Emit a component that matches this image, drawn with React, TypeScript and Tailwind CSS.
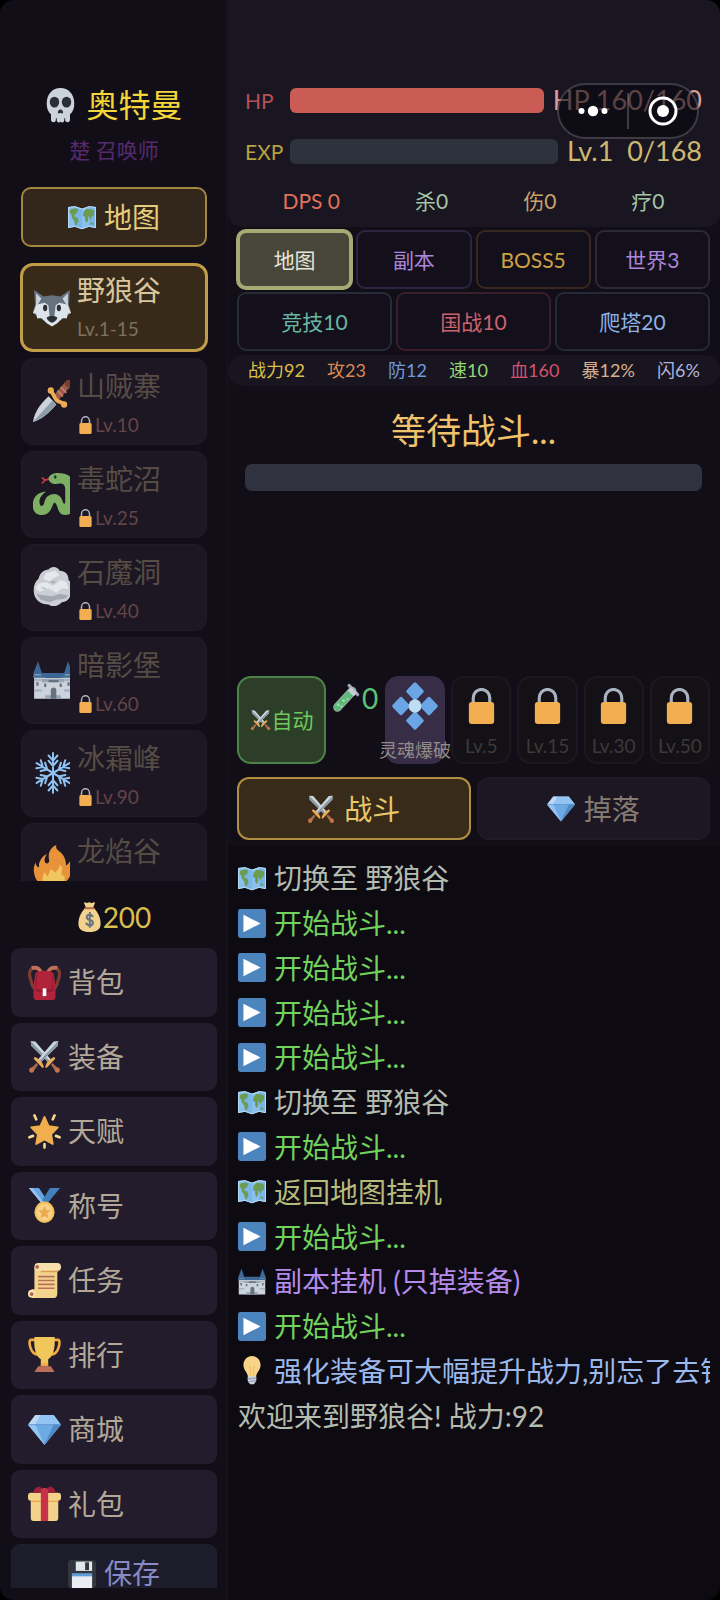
import type { ReactNode } from "react";

type IconName =
  | "skull" | "map" | "wolf" | "dagger" | "snake" | "rock" | "castle" | "snow" | "fire"
  | "money" | "bag" | "swords" | "star" | "medal" | "scroll" | "trophy" | "gem" | "gift"
  | "disk" | "lock" | "tube" | "rune" | "play" | "bulb";

const sword = (
  <>
    <path fill="#CCD6DD" d="M3 2l5 .5L25 21l-3 3L3.500 7z" />
    <path fill="#8899A6" d="M3 2l20.500 20.500L22 24 3.500 7z" />
    <path fill="#EBAA5A" d="M28 18.500c1 0 2 1 1.500 2l-9 9c-1 .6-2-.6-1.600-1.600l1.600-3.400 4-4z" />
    <path fill="#A5694B" d="M25 26.500l1.800-1.800 6 5.300-3 3z" />
    <circle cx="32" cy="32" r="2.700" fill="#C1744A" />
  </>
);

const art: Record<IconName, ReactNode> = {
  skull: (
    <>
      <path fill="#CCD3DD" d="M34 16C34 6 27 0 18 0S2 6 2 16c0 5.500 1.800 9 5 11v5.500a2.800 2.800 0 0 0 5.600 0V31h1v2.500a2.500 2.500 0 0 0 4.400 1 2.500 2.500 0 0 0 4.400-1V31h1v1.500a2.800 2.800 0 0 0 5.600 0V27c3.200-2 5-5.500 5-11z" />
      <circle cx="11" cy="14.500" r="5.500" fill="#292F33" />
      <circle cx="25" cy="14.500" r="5.500" fill="#292F33" />
      <path fill="#292F33" d="M18 22c2 0 3.500 2 3 3.400-.5 1.200-2 .6-3 .1-1 .5-2.500 1.100-3-.1-.5-1.400 1-3.400 3-3.400z" />
    </>
  ),
  map: (
    <>
      <path fill="#88C0F0" d="M0 5l9-1 9 3 9-3 9 1v26l-9-1.500-9 3-9-3L0 31z" />
      <path fill="#6BA9E0" d="M9 4l9 3v25.500l-9-3zM27 4l9 1v26l-9-1.500z" opacity=".45" />
      <path fill="#6B9C52" d="M3 8l6-1.500 4 1.500-1 4-3 2-1 3 4 1 1.500 4-2.500 6-2-1-1-5-3-4-1-4-2-2zM20 11l4-4 7 1 3 2-1 6-3 1-1 4-2-4-1-1v5l-2 4-2-4v-4l-3-1zM29 24l4 1-1 2-3-.5z" />
      <path fill="none" stroke="#BBDDF5" strokeWidth="1.200" d="M.6 5.500l8.400-1 9 3 9-3 8.400 1V30.500L27 29l-9 3-9-3-8.400 1.500z" />
    </>
  ),
  wolf: (
    <>
      <path fill="#66727F" d="M1 1l9 6 8-1 8 1 9-6-1 14 2 7-3 3-15 10L3 25l-3-3 2-7z" />
      <path fill="#CCD3DD" d="M3 4l5 5-5 8zM33 4l-5 5 5 8z" />
      <path fill="#DDE3EB" d="M0 23l3-8 8-2 6 4 1 9 1-9 6-4 8 2 3 8-3 .500-1 4.500-4-.5-5 5-5 3-5-3-5-5-4 .5-1-4.500z" />
      <path fill="#66727F" d="M14 7h8l-1 13-1 7h-4l-1-7z" />
      <path fill="#292F33" d="M13 27c1-2 9-2 10 0 0 2-3 4.500-5 5-2-.5-5-3-5-5z" />
      <ellipse cx="11.500" cy="18" rx="2" ry="3" fill="#292F33" />
      <ellipse cx="24.500" cy="18" rx="2" ry="3" fill="#292F33" />
    </>
  ),
  dagger: (
    <>
      <path fill="#CCD3DD" d="M0 36c1-7 5-14 14-22l7 7C14 29 7 34 0 36z" />
      <path fill="#8F9DAA" d="M0 36L17.500 17.500 21 21C14 29 7 34 0 36z" />
      <path stroke="#9A5B4D" strokeWidth="6" d="M21 15L31 4" />
      <path stroke="#C98267" strokeWidth="1.500" d="M22 9l5 5m-2-8l5 5" />
      <path stroke="#EFAB50" strokeWidth="3.400" strokeLinecap="round" d="M16 9c2 2 3 6 5 8s6 2 7 4" fill="none" />
      <circle cx="16" cy="9" r="2.800" fill="#EFAB50" />
      <circle cx="28" cy="21" r="2.800" fill="#EFAB50" />
      <circle cx="32" cy="3" r="3.200" fill="#783E2A" />
    </>
  ),
  snake: (
    <>
      <path fill="none" stroke="#C9384A" strokeWidth="1.500" d="M15 5l-4 1-3-2m3 2l-3 3" />
      <path fill="#7DB062" d="M14 4c2-4 8-4.500 13-3.500 7 1 9 5 9 11V30c0 4-3 6-7 6-6 0-6-5-8-9-1-2-2-2-3 0-2 5-4 9-10 9-8 0-10-8-7-14 2-4 6-6 11-6-4 2-7 6-6 10 .5 3 3 3 4 0 1-5 4-8 9-8s7 4 8 7c1 2 2 2 2-1V14c0-4-2-5-5-5-5 1-10 0-10-5z" />
      <ellipse cx="20" cy="3.500" rx="1.200" ry="1.500" fill="#292F33" />
    </>
  ),
  rock: (
    <>
      <path fill="#CBCFD5" d="M5 11c1-5 5-8 9-8 2-3 8-3 10 1 5 0 8 3 8 8 4 3 4 8 2 11 0 5-4 8-8 8-4 4-9 4-12 2-7 0-12-4-13-9-1-5 0-10 4-13z" />
      <path fill="#E6E9EC" d="M12 6l8-2 4 4-5 2-4 3-6-2zM5 15l7-1 6 3 7-5 5 2 2 6-6-1-5 4-7-4-8 3-4-3z" />
      <path fill="#A3A9B1" d="M3 24l6 1 8 1 7-2 8 1-3 3-8 1-6 2-8-2zM15 13l6 0-3 2zM7 18l5 1-2 1z" />
    </>
  ),
  castle: (
    <>
      <path fill="#CCD3DD" d="M1 13h7l3 3h14l3-3h7v21H1z" />
      <path fill="#99A5B5" d="M8 17h20v3H8zM11 31h14v3H11z" />
      <path fill="#3A6797" d="M0 13L4.500 2 8 12h20l3.500-10L36 13h-7l-2 3H9l-2-3z" />
      <path fill="#AAB3C2" d="M1 17h7v2H1zM28 17h7v2h-7zM1 26h7v2H1zM28 26h7v2h-7z" />
      <path fill="#66727F" d="M16 34v-7a2.500 2.500 0 0 1 5 0v7zM3 20h2v3H3zM31 20h2v3h-2zM10 21h2v3h-2zM24 21h2v3h-2zM14 18h9v2h-9z" />
      <path fill="#3B6E95" d="M0 14h9v2H0zM27 14h9v2h-9z" />
    </>
  ),
  snow: (
    <g fill="none" stroke="#8FC2F2" strokeWidth="1.800" strokeLinecap="round">
      {[0, 60, 120, 180, 240, 300].map((a) => (
        <path key={a} transform={`rotate(${a} 18 18)`} d="M18 18V1M14 3l4 4.500 4-4.500M14 7.500l4 4.500 4-4.500" />
      ))}
    </g>
  ),
  fire: (
    <>
      <path fill="#E8923A" d="M35 19c0-2-.5-4-1.300-5.800-1 2-2.400 3.500-4 4.300C30 11 26 7 23 5c-2-1.300-2.500-3-2-5-5 2-8 7-6.500 13 .5 3-3.500 4-4 1-.3-2 .5-4 2-6-4 1-8 7-7 11-2 0-3-2-3-4-2 3-2 6-1.500 9C2 32 9 36 18 36s17-7 17-17z" />
      <path fill="#F0C65F" d="M28 26c-2 1-3-1-2-4 1-2 0-4-2-5 0 3-2 4-4 7-1-2-3-3-5-3 1 2-1 3-2 6-1-1-2-2-2-4-5 6-2 13 7 13 8 0 12-4 10-10z" />
    </>
  ),
  money: (
    <>
      <path fill="#F2D28C" d="M12 7h12c6 5 10 12 10 19 0 7-6 10-16 10S2 33 2 26C2 19 6 12 12 7z" />
      <path fill="#F2D28C" d="M10 1c2-2 3 1 5 0s3-1 5 0 4-2 6 0l-3 6H13z" />
      <path stroke="#BF6952" strokeWidth="2.500" strokeLinecap="round" d="M12 7.500h12" />
      <path fill="none" stroke="#67757F" strokeWidth="2.800" d="M23 18c-1-3-9-4-9 0 0 5 9 2 9 7 0 4-8 4-10 0M18.500 12v19" />
    </>
  ),
  bag: (
    <>
      <path fill="none" stroke="#7A3D31" strokeWidth="3.500" d="M10 3C2 2 0 8 3 15c1 6 3 9 6 11M26 3c8-1 10 5 7 12-1 6-3 9-6 11" />
      <path fill="none" stroke="#BF7259" strokeWidth="4" d="M14 7C12 3 9 2 4 3M22 7c2-4 5-5 10-4" />
      <path fill="#B0233A" d="M8 9c1-4 19-4 20 0l2 12v11c0 3-1 4-3 4H9c-2 0-3-1-3-4V21z" />
      <path fill="#931B32" d="M9 10h18l1 16c0 3-20 3-20 0z" />
      <path fill="#B0233A" d="M10 8h16l1 16c0 2-18 2-18 0z" />
      <path fill="#F5F8FA" d="M16 24h4v8h-4z" />
    </>
  ),
  swords: (
    <>
      {sword}
      <g transform="matrix(-1 0 0 1 36 0)">{sword}</g>
    </>
  ),
  star: (
    <>
      <path fill="#F0AE4D" stroke="#F0AE4D" strokeWidth="2" strokeLinejoin="round" d="M18 3l4.500 9.500 10 1.300-7.300 7 1.800 10L18 26l-9 4.800 1.800-10-7.300-7 10-1.300z" />
      <g stroke="#F5D98D" strokeWidth="2.800" strokeLinecap="round">
        <path d="M7 1.500l2 4M29 1.500l-2 4M1.500 24l4-1.500M34.500 24l-4-1.500M18 31v3.500" />
      </g>
    </>
  ),
  medal: (
    <>
      <path fill="#65A6E4" d="M1 0h11l9 13-6 3z" />
      <path fill="#4380BC" d="M35 0H24l-9 13 6 3z" />
      <path fill="#9CC3EC" d="M1 0h4l12 15h-3z" />
      <circle cx="18" cy="25" r="11" fill="#F3C35D" />
      <circle cx="18" cy="25" r="8.500" fill="#F8DDA6" opacity=".6" />
      <path fill="#EBAA4E" d="M18 18l2 5h5l-4 3.300 1.500 5.200L18 28.500l-4.500 3L15 26.300 11 23h5z" />
    </>
  ),
  scroll: (
    <>
      <path fill="#F4D38C" d="M7 4h25v26c0 4-1 6-4 6H4V27h3z" />
      <rect x="7" width="29" height="8" rx="4" fill="#F9DFAC" />
      <path fill="#DC9C4D" d="M14 8h19v1.500H14z" />
      <circle cx="10" cy="4" r="2" fill="#AD6555" />
      <circle cx="4" cy="31.500" r="4" fill="#F9DFAC" />
      <circle cx="4" cy="32" r="2" fill="#AD6555" />
      <path stroke="#B9705A" strokeWidth="1.700" d="M11 14h18M11 18h18M11 22h18M11 26h18" />
    </>
  ),
  trophy: (
    <>
      <path fill="none" stroke="#EFAA45" strokeWidth="2.800" d="M9 3H3c-3 0-1 15 8 15M27 3h6c3 0 1 15-8 15" />
      <path fill="#F1C75C" d="M7 0h22c1 13-2 20-7 23v7h-8v-7C9 20 6 13 7 0z" />
      <path fill="#EFAA45" d="M14 27h8v3h-8z" />
      <path fill="#BC6F5A" d="M11 30h14l4 6H7z" />
    </>
  ),
  gem: (
    <>
      <path fill="#6DAAE4" d="M8 3h20l8 10-18 21L0 13z" />
      <path fill="#BDD8F2" d="M8 3l-8 10h8l6-10z" />
      <path fill="#93C4F2" d="M14 3h8l6 10H8zM22 3h6l8 10h-8z" />
      <path fill="#5289C4" d="M28 13h8L18 34z" />
      <path fill="#93C4F2" d="M0 13h8l10 21z" />
      <path stroke="#5289C4" strokeWidth=".7" d="M0 13h36" />
    </>
  ),
  gift: (
    <>
      <path fill="#F5D28A" d="M3 14h30v19c0 2-1 3-3 3H6c-2 0-3-1-3-3z" />
      <rect y="7" width="36" height="8" rx="3" fill="#F5D28A" />
      <path fill="#EFA850" d="M3 15h30v1.500H3z" />
      <path fill="#C73448" d="M14 7h8v29h-8z" />
      <path fill="#A0203A" d="M6 7c0-4 4-7 7-6 2 1 4 2 5 3 1-1 3-2 5-3 3-1 7 2 7 6z" />
      <path fill="#C73448" d="M14 7c0-4 2-5 4-5s4 1 4 5z" />
    </>
  ),
  disk: (
    <>
      <rect width="36" height="36" rx="4" fill="#31373D" />
      <path fill="#E1E8ED" d="M10 2h21v12H10z" />
      <path fill="#31373D" d="M22 3h5v10h-5z" />
      <path fill="#E9EDF2" d="M5 20h26v16H5z" />
      <path fill="#5F9EDA" d="M5 17h26v4H5z" />
    </>
  ),
  lock: (
    <>
      <path fill="none" stroke="#AAB3C0" strokeWidth="3.200" d="M9.500 16V10a8.500 8.500 0 0 1 17 0v6" />
      <rect x="5" y="14" width="26" height="22" rx="3" fill="#F2AE50" />
    </>
  ),
  tube: (
    <>
      <path stroke="#9FA9B3" strokeWidth="11" strokeLinecap="round" d="M7 29L26 10" />
      <path stroke="#9FA9B3" strokeWidth="4" strokeLinecap="round" d="M22 3l11 11" />
      <path stroke="#5CB978" strokeWidth="8.500" strokeLinecap="round" d="M7 29L23 13" />
      <g fill="#A6E5B4">
        <circle cx="8" cy="26" r="1.600" /><circle cx="12" cy="28" r="1.300" /><circle cx="15" cy="21" r="1.600" /><circle cx="20" cy="19" r="1.200" />
      </g>
      <path fill="#C5CED6" d="M20 9l5-4 7 7-4 4z" />
    </>
  ),
  rune: (
    <>
      <g fill="#6AA6E6">
        <rect x="13" y="2.500" width="10" height="10" rx="1.200" transform="rotate(45 18 7.500)" />
        <rect x="13" y="23.500" width="10" height="10" rx="1.200" transform="rotate(45 18 28.500)" />
        <rect x="2.500" y="13" width="10" height="10" rx="1.200" transform="rotate(45 7.500 18)" />
        <rect x="23.500" y="13" width="10" height="10" rx="1.200" transform="rotate(45 28.500 18)" />
      </g>
      <circle cx="18" cy="18" r="4.800" fill="#BDDDF4" />
    </>
  ),
  play: (
    <>
      <rect width="36" height="36" rx="3" fill="#4C84BE" />
      <path fill="#fff" d="M7 7l22 11L7 29z" />
    </>
  ),
  bulb: (
    <>
      <path fill="#F8D488" d="M29 11c0-6-5-11-11-11S7 5 7 11c0 7 5 9 6 15h10c1-6 6-8 6-15z" />
      <path fill="none" stroke="#EDC062" strokeWidth="1.500" d="M14 13l2 2v11M22 13l-2 2v11" />
      <path fill="#CCD3DD" d="M12.500 25h11v6l-3 4h-5l-3-4z" />
      <path stroke="#99A5B5" strokeWidth="1.500" d="M12.500 28.500l11-1M13 32l10-1.500" />
    </>
  ),
};

function Icon({ name, className }: { name: IconName; className: string }) {
  return (
    <svg viewBox="0 0 36 36" preserveAspectRatio="none" fill="none" aria-hidden="true" className={`shrink-0 ${className}`}>
      {art[name]}
    </svg>
  );
}

const zones: { icon: IconName; name: string; level: string }[] = [
  { icon: "dagger", name: "山贼寨", level: "Lv.10" },
  { icon: "snake", name: "毒蛇沼", level: "Lv.25" },
  { icon: "rock", name: "石魔洞", level: "Lv.40" },
  { icon: "castle", name: "暗影堡", level: "Lv.60" },
  { icon: "snow", name: "冰霜峰", level: "Lv.90" },
  { icon: "fire", name: "龙焰谷", level: "" },
];

const menu: { icon: IconName; name: string }[] = [
  { icon: "bag", name: "背包" },
  { icon: "swords", name: "装备" },
  { icon: "star", name: "天赋" },
  { icon: "medal", name: "称号" },
  { icon: "scroll", name: "任务" },
  { icon: "trophy", name: "排行" },
  { icon: "gem", name: "商城" },
  { icon: "gift", name: "礼包" },
];

const counters = [
  { text: "DPS 0", color: "text-[#e0725c]" },
  { text: "杀0", color: "text-[#a3c5a6]" },
  { text: "伤0", color: "text-[#c8a36c]" },
  { text: "疗0", color: "text-[#a3c5a6]" },
];

const modes = [
  { text: "副本", color: "text-[#ab86dc] border-[#2b2540]" },
  { text: "BOSS5", color: "text-[#cda23f] border-[#38291f]" },
  { text: "世界3", color: "text-[#ab86dc] border-[#2b2938]" },
];

const arenas = [
  { text: "竞技10", color: "text-[#68b8a4] border-[#262b38]" },
  { text: "国战10", color: "text-[#cb626e] border-[#3a1e2b]" },
  { text: "爬塔20", color: "text-[#8eb2e2] border-[#262936]" },
];

const attributes = [
  { text: "战力92", color: "text-[#dcc049]" },
  { text: "攻23", color: "text-[#d88a55]" },
  { text: "防12", color: "text-[#6c9bdc]" },
  { text: "速10", color: "text-[#93d873]" },
  { text: "血160", color: "text-[#d2536a]" },
  { text: "暴12%", color: "text-[#d8b08e]" },
  { text: "闪6%", color: "text-[#b2b4dc]" },
];

const start = { icon: "play" as IconName, text: "开始战斗...", color: "text-[#72d35c]" };
const travel = { icon: "map" as IconName, text: "切换至 野狼谷", color: "text-[#b4bcb0]" };

const log: { icon?: IconName; text: string; color: string }[] = [
  travel, start, start, start, start, travel, start,
  { icon: "map", text: "返回地图挂机", color: "text-[#b5bb7c]" },
  start,
  { icon: "castle", text: "副本挂机 (只掉装备)", color: "text-[#b48bea]" },
  start,
  { icon: "bulb", text: "强化装备可大幅提升战力,别忘了去铁", color: "text-[#9bb9ec]" },
  { text: "欢迎来到野狼谷! 战力:92", color: "text-[#b4bcb0]" },
];

function Sidebar() {
  return (
    <aside className="flex w-[228px] shrink-0 flex-col border-r border-[#191520] bg-[#120e17] pb-3 pl-px pt-[85px]">
      <h1 className="flex items-center justify-center gap-[10px] text-[32px] leading-[40px] text-[#f3d63a]">
        <Icon name="skull" className="h-[35px] w-[31px]" />
        奥特曼
      </h1>
      <p className="mt-[10px] text-center text-[21px] leading-[30px] text-[#552a70]">楚 召唤师</p>

      <button className="mx-5 mt-[22px] flex h-[60px] items-center justify-center gap-[8px] rounded-[10px] border-2 border-[#a5863f] bg-[#32271a] text-[28px] text-[#e5cc7b]">
        <Icon name="map" className="h-[29px] w-[28px]" />
        地图
      </button>

      <div className="mx-[19px] mt-[16px] flex h-[618px] shrink-0 flex-col gap-[6px] overflow-hidden px-px pt-px">
        <button className="mb-px flex h-[87px] shrink-0 items-center gap-[6px] rounded-[12px] border-2 border-[#c19c49] bg-[#382a19] px-[10px] text-left shadow-[0_0_0_1px_#c19c49]">
          <span className="w-[38px] overflow-hidden">
            <Icon name="wolf" className="h-[38px] w-[38px]" />
          </span>
          <span className="flex flex-col">
            <span className="text-[28px] leading-[42px] text-[#d8c6a0]">野狼谷</span>
            <span className="text-[19px] leading-[35px] text-[#7d7160]">Lv.1-15</span>
          </span>
        </button>
        {zones.map((z) => (
          <button key={z.name} className="flex h-[87px] shrink-0 items-start gap-[7px] rounded-[12px] border border-[#211b28] bg-[#1c1722] px-[11px] pt-[6px] text-left">
            <span className="mt-[15px] w-[37px] overflow-hidden">
              <Icon name={z.icon} className="h-[42px] w-[40px]" />
            </span>
            <span className="flex flex-col">
              <span className="text-[28px] leading-[42px] text-[#564c45]">{z.name}</span>
              {z.level && (
                <span className="flex items-center gap-[1px] text-[19px] leading-[35px] text-[#644449]">
                  <Icon name="lock" className="h-[18px] w-[17px]" />
                  {z.level}
                </span>
              )}
            </span>
          </button>
        ))}
      </div>

      <p className="flex h-[67px] shrink-0 items-center justify-center gap-[1px] pt-[4px] text-[28px] text-[#d8bd4f]">
        <Icon name="money" className="h-[30px] w-[25px]" />
        200
      </p>

      <nav className="mx-[10px] flex min-h-0 flex-1 flex-col gap-[6px] overflow-hidden">
        <div className="grid h-[590px] shrink-0 auto-rows-fr gap-[6px]">
          {menu.map((m) => (
            <button key={m.name} className="flex items-center gap-[7px] rounded-[9px] bg-[#221c2c] px-[17px] text-[28px] text-[#b3a898]">
              <Icon name={m.icon} className="h-[35px] w-[33px]" />
              {m.name}
            </button>
          ))}
        </div>
        <button className="flex min-h-0 flex-1 items-end justify-center gap-[8px] rounded-t-[9px] border border-b-0 border-[#1e2031] bg-[#1c1c2b] text-[28px] leading-[30px] text-[#878ac4]">
          <Icon name="disk" className="h-[28px] w-[28px]" />
          保存
        </button>
      </nav>
    </aside>
  );
}

function Header() {
  return (
    <header className="relative flex flex-col rounded-b-[14px] bg-[#191521] pb-[11px] pl-[17px] pr-[18px] pt-[79px]">
      <div className="flex h-[43px] items-center">
        <span className="w-[45px] text-[21px] text-[#b94f55]">HP</span>
        <span className="h-[25px] flex-1 rounded-[6px] bg-[#cb5b55]" />
        <span className="pl-[9px] text-[27px] text-[#d99c9b]">HP 160/160</span>
      </div>
      <div className="mt-[8px] flex h-[43px] items-center">
        <span className="w-[45px] text-[21px] text-[#b6a140]">EXP</span>
        <span className="h-[25px] flex-1 rounded-[6px] bg-[#2e323d]" />
        <span className="whitespace-pre pl-[9px] text-[27px] text-[#cdb872]">Lv.1  0/168</span>
      </div>
      <div className="mt-[13px] flex justify-around text-[21px] leading-[30px]">
        {counters.map((c) => (
          <span key={c.text} className={c.color}>{c.text}</span>
        ))}
      </div>
      <div className="absolute right-[21px] top-[83px] flex h-[56px] w-[142px] items-center rounded-full border-2 border-white/20 bg-[#07060c]/60">
        <button aria-label="更多" className="flex flex-1 justify-center">
          <svg viewBox="0 0 30 12" className="h-3 w-[30px]" fill="#fff">
            <circle cx="3.500" cy="6" r="3" />
            <circle cx="15" cy="6" r="5.200" />
            <circle cx="26.500" cy="6" r="3" />
          </svg>
        </button>
        <span className="h-9 w-[2px] bg-white/20" />
        <button aria-label="关闭" className="flex flex-1 justify-center">
          <svg viewBox="0 0 30 30" className="h-[30px] w-[30px]">
            <circle cx="15" cy="15" r="13" fill="none" stroke="#fff" strokeWidth="3" />
            <circle cx="15" cy="15" r="6" fill="#fff" />
          </svg>
        </button>
      </div>
    </header>
  );
}

export default function App() {
  return (
    <div className="h-screen bg-black font-['Lato','Noto_Sans_CJK_SC',sans-serif]">
      <div className="flex h-full overflow-hidden rounded-[14px] bg-[#120e17]">
        <Sidebar />
        <main className="flex min-w-0 flex-1 flex-col">
          <Header />

          <div className="flex flex-col gap-[3px] pl-[9px] pr-[10px] pt-[3px] text-[21px] leading-[30px]">
            <div className="grid grid-cols-4 gap-[4px]">
              <button className="h-[59px] rounded-[9px] border-[3px] border-[#a4ab73] bg-[#474739] text-[#e6e4d8] shadow-[0_0_0_1px_#a4ab73]">地图</button>
              {modes.map((m) => (
                <button key={m.text} className={`h-[59px] rounded-[9px] border-2 bg-[#14101b] ${m.color}`}>{m.text}</button>
              ))}
            </div>
            <div className="grid grid-cols-3 gap-[4px]">
              {arenas.map((m) => (
                <button key={m.text} className={`h-[59px] rounded-[9px] border-2 bg-[#14101b] ${m.color}`}>{m.text}</button>
              ))}
            </div>
          </div>

          <div className="mt-[4px] flex justify-around rounded-[15px] bg-[#181420] px-[9px] text-[18px] leading-[31px]">
            {attributes.map((a) => (
              <span key={a.text} className={a.color}>{a.text}</span>
            ))}
          </div>

          <section className="flex h-[290px] shrink-0 flex-col pl-[17px] pr-[18px] pt-[20px]">
            <h2 className="text-center text-[35px] leading-[48px] text-[#efc26b]">等待战斗...</h2>
            <div className="mt-[10px] h-[27px] rounded-[7px] bg-[#30333f]" />
          </section>

          <section className="flex h-[88px] shrink-0 gap-[6px] pl-[9px] pr-[10px]">
            <button className="flex w-[89px] items-center justify-center gap-[1px] rounded-[14px] border-2 border-[#4b8248] bg-[#2c3e28] text-[21px] text-[#6fca5e]">
              <Icon name="swords" className="h-[22px] w-[21px]" />
              自动
            </button>
            <button className="flex w-[47px] items-start gap-[2px] pt-[2px] text-[28px] leading-[40px] text-[#5cc274]">
              <Icon name="tube" className="mt-[5px] h-[30px] w-[28px]" />
              0
            </button>
            <div className="grid min-w-0 flex-1 grid-cols-5 gap-[6px]">
              <button className="flex min-w-0 flex-col items-center rounded-[14px] bg-[#372d46] pt-[5px]">
                <Icon name="rune" className="h-[50px] w-[48px]" />
                <span className="mt-[5px] whitespace-nowrap text-[18px] leading-[28px] text-[#948c86]">灵魂爆破</span>
              </button>
              {["Lv.5", "Lv.15", "Lv.30", "Lv.50"].map((lv) => (
                <button key={lv} className="flex min-w-0 flex-col items-center rounded-[14px] border-2 border-[#1c1821] bg-[#131116] pt-[10px]">
                  <Icon name="lock" className="h-[36px] w-[35px]" />
                  <span className="mt-[8px] text-[19px] leading-[28px] text-[#3c3936]">{lv}</span>
                </button>
              ))}
            </div>
          </section>

          <div className="mt-[13px] grid grid-cols-2 gap-[6px] pl-[9px] pr-[10px] text-[28px]">
            <button className="flex h-[63px] items-center justify-center gap-[9px] rounded-[12px] border-2 border-[#b08f43] bg-[#392b19] text-[#e8c869]">
              <Icon name="swords" className="h-[30px] w-[28px]" />
              战斗
            </button>
            <button className="flex h-[63px] items-center justify-center gap-[9px] rounded-[12px] border-2 border-[#1f1a27] bg-[#1c1723] text-[#857b72]">
              <Icon name="gem" className="h-[29px] w-[28px]" />
              掉落
            </button>
          </div>

          <section className="mt-[6px] flex-1 overflow-hidden bg-[#0d0a12] pl-[10px] pr-[10px] pt-[10px]">
            <ul className="grid h-[582px] auto-rows-fr overflow-hidden">
              {log.map((l, i) => (
                <li key={i} className={`flex items-center gap-[8px] whitespace-nowrap text-[28px] leading-[44px] ${l.color}`}>
                  {l.icon && <Icon name={l.icon} className="h-[29px] w-[28px]" />}
                  {l.text}
                </li>
              ))}
            </ul>
          </section>
        </main>
      </div>
    </div>
  );
}
